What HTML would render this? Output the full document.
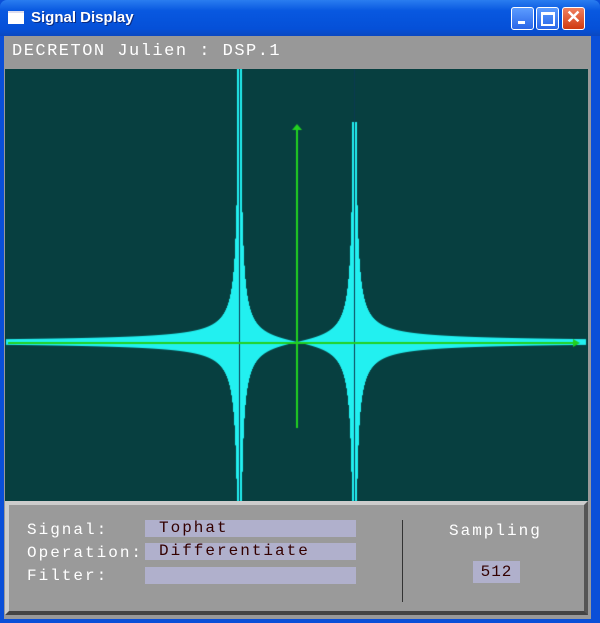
<!DOCTYPE html>
<html><head><style>
body{margin:0;width:600px;height:623px;overflow:hidden;background:#0a4fd8;font-family:"Liberation Mono",monospace}
#tb{position:absolute;left:0;top:0;width:600px;height:36px;background:linear-gradient(#2a7df0,#0858e0 30%,#0550d8 80%,#0a48c0);border-radius:7px 7px 0 0}
#tt{position:absolute;left:31px;top:9px;color:#fff;font:bold 15px "Liberation Sans",sans-serif;text-shadow:1px 1px #0a2a80}
#ic{position:absolute;left:8px;top:11px;width:16px;height:11px;background:#fff;border-top:2px solid #dde}
.bt{position:absolute;top:7px;width:21px;height:21px;border:1px solid #fff;border-radius:3px;background:linear-gradient(#5c9cff,#2a66e8)}
#frame{position:absolute;left:4px;top:36px;width:587px;height:583px;background:#999}
#hdr{position:absolute;left:5px;top:36px;width:585px;height:32px;background:#989898;color:#fff;font-size:17px;line-height:31px;padding-left:7px;box-sizing:border-box;letter-spacing:1.5px}
canvas{position:absolute;left:5px;top:69px}
#pan{position:absolute;left:5px;top:501px;width:583px;height:114px;background:#9a9a9a;border-top:4px solid #ccc;border-left:4px solid #ccc;border-right:4px solid #555;border-bottom:4px solid #444;box-sizing:border-box}
.l{position:absolute;color:#fff;font-size:16px;letter-spacing:2px}
.f{position:absolute;left:145px;width:211px;height:17px;background:#b0b0cc;color:#300;font-size:16px;line-height:16px;padding-left:14px;box-sizing:border-box;letter-spacing:2px}
</style></head><body>
<div id="tb"><div id="ic"></div><div id="tt">Signal Display</div>
<div class="bt" style="left:511px"><div style="position:absolute;left:6px;top:13px;width:7px;height:3px;background:#fff"></div></div>
<div class="bt" style="left:536px"><div style="position:absolute;left:4px;top:4px;width:10px;height:9px;border:2px solid #fff;border-top-width:3px"></div></div>
<div class="bt" style="left:562px;background:linear-gradient(#f08060,#d03a10)"><div style="position:absolute;left:3px;top:-1px;color:#fff;font:bold 18px 'Liberation Sans',sans-serif">✕</div></div>
</div>
<div id="frame"></div>
<div id="hdr">DECRETON Julien : DSP.1</div>
<canvas id="c" width="583" height="432"></canvas>
<div id="pan"></div>
<div class="l" style="left:27px;top:521px">Signal:</div>
<div class="l" style="left:27px;top:544px">Operation:</div>
<div class="l" style="left:27px;top:567px">Filter:</div>
<div class="f" style="top:520px">Tophat</div>
<div class="f" style="top:543px">Differentiate</div>
<div class="f" style="top:567px"></div>
<div style="position:absolute;left:402px;top:520px;width:1px;height:82px;background:#333"></div>
<div class="l" style="left:449px;top:522px">Sampling</div>
<div style="position:absolute;left:473px;top:561px;width:47px;height:22px;background:#b0b0cc;color:#300;font-size:16px;line-height:22px;text-align:center;letter-spacing:1px">512</div>
<script>
var c=document.getElementById('c').getContext('2d');
c.fillStyle='#073f40';c.fillRect(0,0,583,432);
var ox=5,oy=69,cy=342-oy;
c.fillStyle='#22f0f0';
for(var X=6;X<586;X++){var a=1/(X-239)+1/(X-354);if(!isFinite(a))continue;var A=Math.abs(400*a);
var up=Math.min(A,X<297?cy:cy-53),dn=Math.min(A,432-cy);
c.fillRect(X-ox,cy-up,1,up+dn);}
c.fillRect(237-ox,0,5,432);c.fillRect(352-ox,122-oy,5,432);
c.fillStyle='#0a3a50';c.fillRect(239-ox,0,1,432);c.fillRect(354-ox,0,1,432);
c.fillStyle='#22d020';
c.fillRect(8-ox,cy,570,2);
c.beginPath();c.moveTo(580-ox,cy+1);c.lineTo(573-ox,cy-3);c.lineTo(573-ox,cy+5);c.fill();
c.fillRect(296-ox,127-oy,2,301);
c.beginPath();c.moveTo(297-ox,124-oy);c.lineTo(292-ox,130-oy);c.lineTo(302-ox,130-oy);c.fill();
</script>
</body></html>
